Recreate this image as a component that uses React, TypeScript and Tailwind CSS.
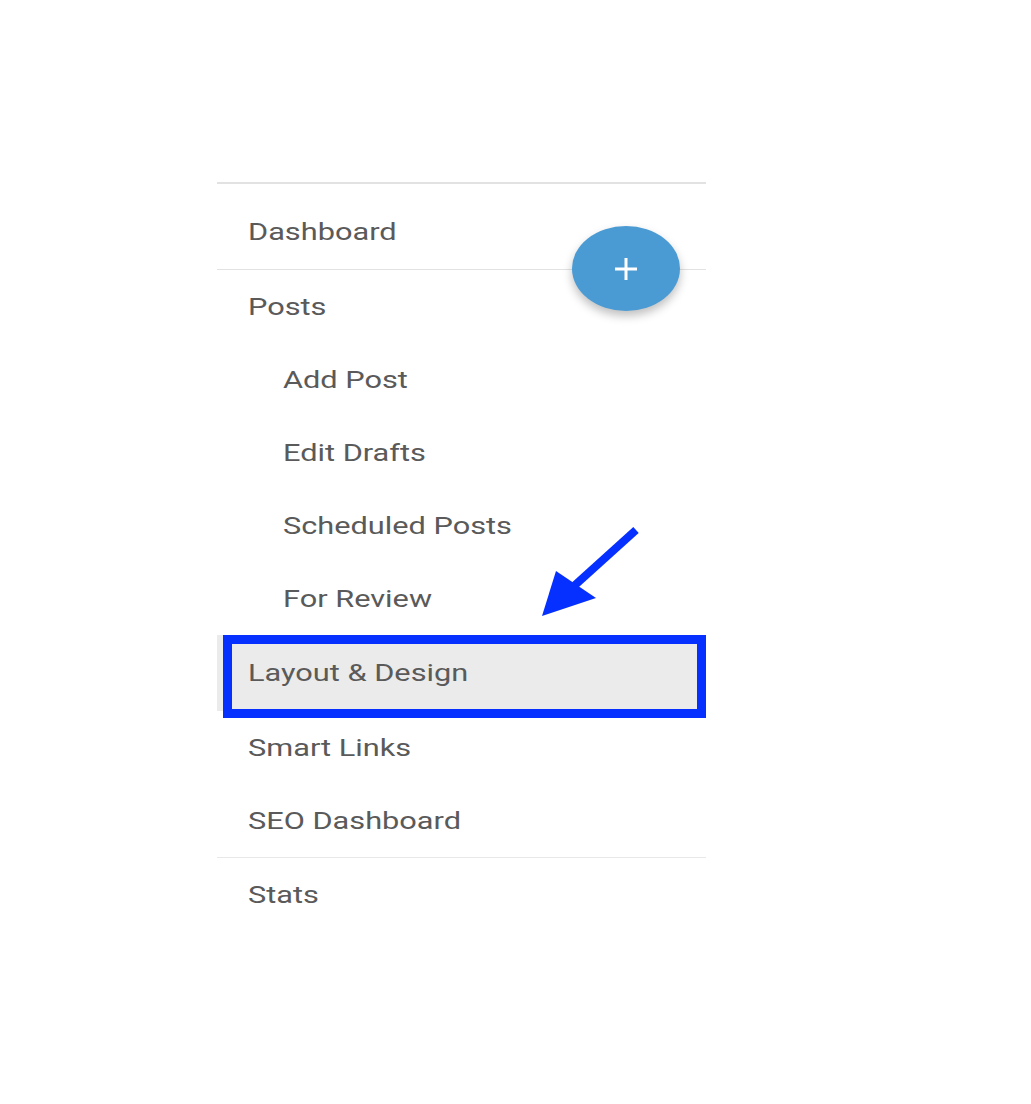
import React from "react";

type NavItem = { label: string; sub?: boolean; active?: boolean };

const posts: NavItem[] = [
  { label: "Posts" },
  { label: "Add Post", sub: true },
  { label: "Edit Drafts", sub: true },
  { label: "Scheduled Posts", sub: true },
  { label: "For Review", sub: true },
];

const extras: NavItem[] = [
  { label: "Layout & Design", active: true },
  { label: "Smart Links" },
  { label: "SEO Dashboard" },
];

function Label({ text }: { text: string }) {
  return (
    <span className="inline-block origin-left scale-x-[1.28] text-[24px] leading-none text-[#5a5a5a] whitespace-nowrap">
      {text}
    </span>
  );
}

function Row({ item }: { item: NavItem }) {
  if (item.active) {
    return (
      <div className="relative flex h-[76px] items-center bg-[#ebebeb] pl-[31px]">
        <Label text={item.label} />
        {/* annotation box */}
        <div className="pointer-events-none absolute left-[6px] right-0 top-0 bottom-[-7px] border-[9px] border-[#0530ff]"></div>
      </div>
    );
  }
  return (
    <div className={`flex h-[73px] items-center ${item.sub ? "pl-[66px]" : "pl-[31px]"}`}>
      <Label text={item.label} />
    </div>
  );
}

export default function App() {
  return (
    <div
      className="relative min-h-[1104px] bg-white pt-[182px] pl-[217px]"
      style={{ fontFamily: "Roboto, 'Liberation Sans', sans-serif" }}
    >
      <nav className="relative w-[489px] border-t-2 border-[#e2e2e2]">
        <div className="flex h-[85px] items-center pt-[10px] pl-[31px]">
          <Label text="Dashboard" />
        </div>
        <div className="border-t border-[#e2e2e2]">
          {posts.map((item) => (
            <Row key={item.label} item={item} />
          ))}
          {extras.map((item) => (
            <Row key={item.label} item={item} />
          ))}
        </div>
        <div className="border-t border-[#e8e8e8]">
          <Row item={{ label: "Stats" }} />
        </div>

        {/* floating add button */}
        <button className="absolute left-[355px] top-[42px] flex h-[85px] w-[108px] items-center justify-center rounded-[50%] bg-[#4a9bd4] shadow-[0_5px_10px_rgba(0,0,0,0.25)]">
          <svg width="26" height="26" viewBox="0 0 26 26">
            <path d="M13 2v22M2 13h22" stroke="#fff" strokeWidth="3" />
          </svg>
        </button>
      </nav>

      {/* annotation arrow */}
      <svg
        className="pointer-events-none absolute left-[530px] top-[520px]"
        width="120"
        height="110"
        viewBox="530 520 120 110"
      >
        <line x1="636" y1="530" x2="574" y2="586" stroke="#0530ff" strokeWidth="8" />
        <polygon points="542,616 556,571 596,598" fill="#0530ff" />
      </svg>
    </div>
  );
}
